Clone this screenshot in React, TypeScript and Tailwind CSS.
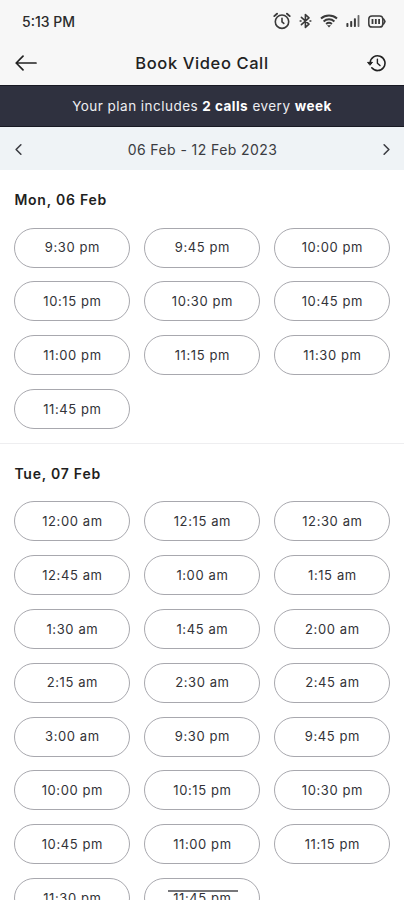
import { ChevronLeft, ChevronRight } from 'lucide-react';

type Day = { label: string; slots: string[] };

const days: Day[] = [
  {
    label: 'Mon, 06 Feb',
    slots: [
      '9:30 pm', '9:45 pm', '10:00 pm',
      '10:15 pm', '10:30 pm', '10:45 pm',
      '11:00 pm', '11:15 pm', '11:30 pm',
      '11:45 pm',
    ],
  },
  {
    label: 'Tue, 07 Feb',
    slots: [
      '12:00 am', '12:15 am', '12:30 am',
      '12:45 am', '1:00 am', '1:15 am',
      '1:30 am', '1:45 am', '2:00 am',
      '2:15 am', '2:30 am', '2:45 am',
      '3:00 am', '9:30 pm', '9:45 pm',
      '10:00 pm', '10:15 pm', '10:30 pm',
      '10:45 pm', '11:00 pm', '11:15 pm',
      '11:30 pm', '11:45 pm',
    ],
  },
];

function AlarmIcon() {
  return (
    <svg width="18" height="18" viewBox="0 0 18 18" fill="none" stroke="currentColor" strokeWidth="1.6" strokeLinecap="round">
      <circle cx="9" cy="9.7" r="6.7" />
      <path d="M9 6.2v3.6l1.8 1.6" />
      <path d="M1.3 4.1 4 1.7M16.7 4.1 14 1.7" strokeWidth="1.9" />
    </svg>
  );
}

function BluetoothIcon() {
  return (
    <svg width="13" height="16" viewBox="0 0 13 16" fill="none" stroke="currentColor" strokeWidth="1.6" strokeLinejoin="round" strokeLinecap="round">
      <path d="m2.4 4.4 7.6 6.8-3.6 3.2V1.6L10 4.8l-7.6 6.8" />
      <path d="M1.2 8h.8M11 8h.8" />
    </svg>
  );
}

function WifiIcon() {
  return (
    <svg width="18" height="14" viewBox="0 0 18 14" fill="none" stroke="currentColor" strokeWidth="2">
      <path d="M1 4.6a12 12 0 0 1 16 0M3.6 7.4a8.2 8.2 0 0 1 10.8 0M6.1 10a4.6 4.6 0 0 1 5.8 0" />
      <path d="M7 11.2h4L9 13.4z" fill="currentColor" stroke="none" />
    </svg>
  );
}

function SignalIcon() {
  return (
    <svg width="14" height="14" viewBox="0 0 14 14" fill="currentColor">
      <rect x="0.4" y="9" width="2" height="4" rx="0.7" />
      <rect x="4.2" y="7" width="2" height="6" rx="0.7" />
      <rect x="7.9" y="4.2" width="2" height="8.8" rx="0.7" />
      <rect x="11.6" y="1" width="1.8" height="12" rx="0.7" opacity="0.75" />
    </svg>
  );
}

function BatteryIcon() {
  return (
    <svg width="18" height="13" viewBox="0 0 18 13" fill="none" stroke="currentColor" strokeWidth="1.5">
      <rect x="0.8" y="0.9" width="14" height="11.2" rx="3.2" />
      <path d="M15.2 3.4 17 6.5l-1.8 3.1" strokeLinejoin="round" />
      <path d="M4.5 4v5M7.8 4v5M11.1 4v5" strokeWidth="1.8" />
    </svg>
  );
}

function BackIcon() {
  return (
    <svg width="22" height="16" viewBox="0 0 22 16" fill="none" stroke="currentColor" strokeWidth="1.7" strokeLinecap="round" strokeLinejoin="round">
      <path d="M21 8H1.2M8 1.2 1.2 8 8 14.8" />
    </svg>
  );
}

function HistoryIcon() {
  return (
    <svg width="19" height="18" viewBox="0 0 19 18" fill="none" stroke="currentColor" strokeWidth="1.6" strokeLinecap="round" strokeLinejoin="round">
      <path d="M3.2 8.6a7.4 7.4 0 1 1 1.6 5.2" />
      <path d="M.9 8.4h4.6L3.2 11z" fill="currentColor" strokeWidth="1" />
      <path d="M10.4 5.2v4l2.6 2.4" strokeWidth="1.4" />
    </svg>
  );
}

function StatusBar() {
  return (
    <div className="flex h-[42px] items-center pl-[22px] pr-[18px]">
      <span className="flex-1 text-[14px] font-medium text-[#2b2b2b]">5:13 PM</span>
      <div className="flex items-center text-[#3a3a3a]">
        <AlarmIcon />
        <span className="ml-[8px]"><BluetoothIcon /></span>
        <span className="ml-[8px]"><WifiIcon /></span>
        <span className="ml-[8px]"><SignalIcon /></span>
        <span className="ml-[8px]"><BatteryIcon /></span>
      </div>
    </div>
  );
}

function TimeSlot({ time }: { time: string }) {
  return (
    <button
      type="button"
      className="h-[40px] rounded-full border border-[#a8a8ae] pt-px text-[13px] tracking-[0.6px] text-[#333338]"
    >
      {time}
    </button>
  );
}

function DaySection({ day }: { day: Day }) {
  return (
    <section className="h-[273.6px] border-b border-[#eeeef0] px-[14.4px] pt-[20px] last:h-auto last:border-b-0">
      <h2 className="text-[14px] font-semibold leading-[20px] tracking-[0.77px] text-[#1f1f22]">{day.label}</h2>
      <div className="mt-[17.5px] grid grid-cols-[repeat(3,116px)] gap-x-[14px] gap-y-[13.87px]">
        {day.slots.map((time) => (
          <TimeSlot key={time} time={time} />
        ))}
      </div>
    </section>
  );
}

export default function App() {
  return (
    <div className="relative h-[900px] w-[404px] overflow-hidden bg-white font-['Inter',sans-serif]">
      <header className="h-[85px] bg-[#f7f7f7]">
        <StatusBar />
        <div className="flex h-[42px] items-center justify-between pl-[15px] pr-[18px] text-[#222]">
          <button type="button" aria-label="Back">
            <BackIcon />
          </button>
          <h1 className="text-[16.5px] font-medium tracking-[0.6px]">Book Video Call</h1>
          <button type="button" aria-label="History">
            <HistoryIcon />
          </button>
        </div>
      </header>

      <div className="flex h-[42px] items-center justify-center border-y border-[#181923] bg-[#2f313f] pt-px text-[13.5px] tracking-[0.47px] text-[#ededf1]">
        <p>
          Your plan includes <b className="font-bold text-white">2 calls</b> every <b className="font-bold text-white">week</b>
        </p>
      </div>

      <div className="flex h-[43px] items-center justify-between bg-[#eff3f6] pl-[9px] pr-[8px] pt-px text-[#3b3c42]">
        <button type="button" aria-label="Previous week">
          <ChevronLeft className="h-[19px] w-[19px]" strokeWidth={2} />
        </button>
        <span className="text-[14px] tracking-[0.42px]">06 Feb - 12 Feb 2023</span>
        <button type="button" aria-label="Next week">
          <ChevronRight className="h-[19px] w-[19px]" strokeWidth={2} />
        </button>
      </div>

      <main>
        {days.map((day) => (
          <DaySection key={day.label} day={day} />
        ))}
      </main>

      {/* home indicator */}
      <div className="absolute left-[168px] top-[890px] h-[2px] w-[70px] bg-[#77777a]" />
    </div>
  );
}
